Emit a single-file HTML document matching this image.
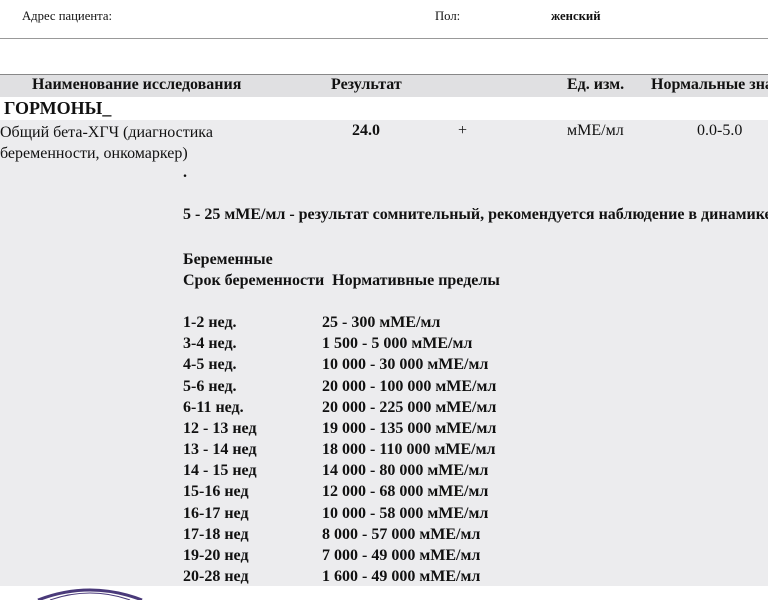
<html style="overflow:hidden;width:768px;height:600px"><head><style>
body{margin:0;width:768px;height:600px;overflow:hidden;background:#fff;font-family:"Liberation Serif",serif;color:#111}
#w{position:relative;width:768px;height:600px;overflow:hidden}
.a{position:absolute;white-space:nowrap}
.b{font-weight:bold}
</style></head><body><div id="w">
<div class="a" style="left:22px;top:9px;font-size:12.7px">Адрес пациента:</div>
<div class="a" style="left:435px;top:9px;font-size:12.7px">Пол:</div>
<div class="a b" style="left:551px;top:9px;font-size:12.7px">женский</div>
<div class="a" style="left:0;top:38px;width:768px;height:1px;background:#999"></div>
<div class="a" style="left:0;top:74px;width:768px;height:22px;background:#e0e0e2;border-top:1px solid #888"></div>
<div class="a b" style="left:32px;top:76px;font-size:16px">Наименование исследования</div>
<div class="a b" style="left:331px;top:76px;font-size:16px">Результат</div>
<div class="a b" style="left:567px;top:76px;font-size:16px">Ед. изм.</div>
<div class="a b" style="left:651px;top:76px;font-size:16px">Нормальные значения</div>
<div class="a b" style="left:4px;top:98px;font-size:18px">ГОРМОНЫ_</div>
<div class="a" style="left:0;top:120px;width:768px;height:466px;background:#ececee"></div>
<div class="a" style="left:0;top:122px;font-size:16px;line-height:21px">Общий бета-ХГЧ (диагностика<br>беременности, онкомаркер)</div>
<div class="a b" style="left:352px;top:122px;font-size:16px">24.0</div>
<div class="a" style="left:458px;top:122px;font-size:16px">+</div>
<div class="a" style="left:567px;top:122px;font-size:16px">мМЕ/мл</div>
<div class="a" style="left:697px;top:122px;font-size:16px">0.0-5.0</div>
<div class="a b" style="left:183px;top:164px;font-size:16px">.</div>
<div class="a b" style="left:183px;top:206px;font-size:16px">5 - 25 мМЕ/мл - результат сомнительный, рекомендуется наблюдение в динамике</div>
<div class="a b" style="left:183px;top:249px;font-size:16px;line-height:21px">Беременные<br>Срок беременности&nbsp; Нормативные пределы</div>
<div class="a b" style="left:183px;top:312px;font-size:16px;line-height:21.17px">1-2 нед.<br>3-4 нед.<br>4-5 нед.<br>5-6 нед.<br>6-11 нед.<br>12 - 13 нед<br>13 - 14 нед<br>14 - 15 нед<br>15-16 нед<br>16-17 нед<br>17-18 нед<br>19-20 нед<br>20-28 нед</div>
<div class="a b" style="left:322px;top:312px;font-size:16px;line-height:21.17px">25 - 300 мМЕ/мл<br>1 500 - 5 000 мМЕ/мл<br>10 000 - 30 000 мМЕ/мл<br>20 000 - 100 000 мМЕ/мл<br>20 000 - 225 000 мМЕ/мл<br>19 000 - 135 000 мМЕ/мл<br>18 000 - 110 000 мМЕ/мл<br>14 000 - 80 000 мМЕ/мл<br>12 000 - 68 000 мМЕ/мл<br>10 000 - 58 000 мМЕ/мл<br>8 000 - 57 000 мМЕ/мл<br>7 000 - 49 000 мМЕ/мл<br>1 600 - 49 000 мМЕ/мл</div>
<svg class="a" style="left:30px;top:586px" width="120" height="14"><path d="M8 14 Q60 -6 112 14" fill="none" stroke="#4a3a7a" stroke-width="3"/><path d="M20 14 Q60 0 100 14" fill="none" stroke="#4a3a7a" stroke-width="1"/></svg>
</div></body></html>
